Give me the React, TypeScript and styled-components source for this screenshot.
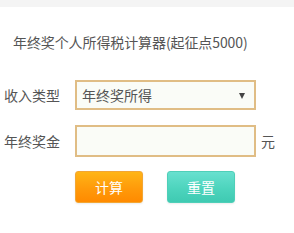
import styled, { createGlobalStyle } from 'styled-components';

const Global = createGlobalStyle`
    body {
        margin: 0;
        background: #ffffff;
        font-family: 'Noto Sans CJK SC', 'Liberation Sans', sans-serif;
        color: #555;
    }
`;

const Page = styled.div`
    width: 294px;
    height: 233px;
    overflow: hidden;
`;

const TopBand = styled.div`
    height: 7px;
    background: #f4f4f4;
`;

const Title = styled.div`
    margin-top: 26px;
    padding-left: 13px;
    font-size: 14px;
    line-height: 18px;
    color: #555;
    letter-spacing: -0.1px;
`;

const Form = styled.div`
    margin-top: 29px;
    display: flex;
    flex-direction: column;
    gap: 15px;
`;

const Row = styled.div`
    display: flex;
    align-items: center;
`;

const Label = styled.div`
    width: 71px;
    padding-left: 4px;
    font-size: 14px;
    color: #555;
`;

const Field = styled.div<{ $h: number }>`
    box-sizing: border-box;
    width: 181px;
    height: ${(p) => p.$h}px;
    border: 2px solid #e0bd85;
    background: #fafcf7;
    display: flex;
    align-items: center;
    justify-content: space-between;
    padding: 0 9px 0 5px;
    font-size: 14px;
    color: #555;
`;

const Arrow = styled.span`
    width: 0;
    height: 0;
    border-left: 3.5px solid transparent;
    border-right: 3.5px solid transparent;
    border-top: 6px solid #444;
    margin-top: 1px;
`;

const Unit = styled.span`
    margin-left: 5px;
    font-size: 14px;
    color: #555;
`;

const Buttons = styled.div`
    display: flex;
    gap: 24px;
    padding-left: 75px;
    margin-top: 14px;
`;

const Button = styled.div<{ $kind: 'calc' | 'reset' }>`
    box-sizing: border-box;
    width: 68px;
    height: 32px;
    border-radius: 3px;
    display: flex;
    align-items: center;
    justify-content: center;
    font-size: 14px;
    color: #fff;
    border: 1px solid ${(p) => (p.$kind === 'calc' ? '#f2a634' : '#4fcfb8')};
    background: ${(p) =>
        p.$kind === 'calc'
            ? 'linear-gradient(#ffb516, #ff9a0a 55%, #ff8a00)'
            : 'linear-gradient(#68e0cf, #4dd4bd 55%, #3fcab2)'};
    box-shadow: 0 1px 2px rgba(0, 0, 0, 0.08);
`;

export default function App() {
    return (
        <Page>
            <Global />
            <TopBand />
            <Title>年终奖个人所得税计算器(起征点5000)</Title>
            <Form>
                <Row>
                    <Label>收入类型</Label>
                    <Field $h={30}>
                        <span>年终奖所得</span>
                        <Arrow />
                    </Field>
                </Row>
                <Row>
                    <Label>年终奖金</Label>
                    <Field $h={32} />
                    <Unit>元</Unit>
                </Row>
            </Form>
            <Buttons>
                <Button $kind="calc">计算</Button>
                <Button $kind="reset">重置</Button>
            </Buttons>
        </Page>
    );
}
